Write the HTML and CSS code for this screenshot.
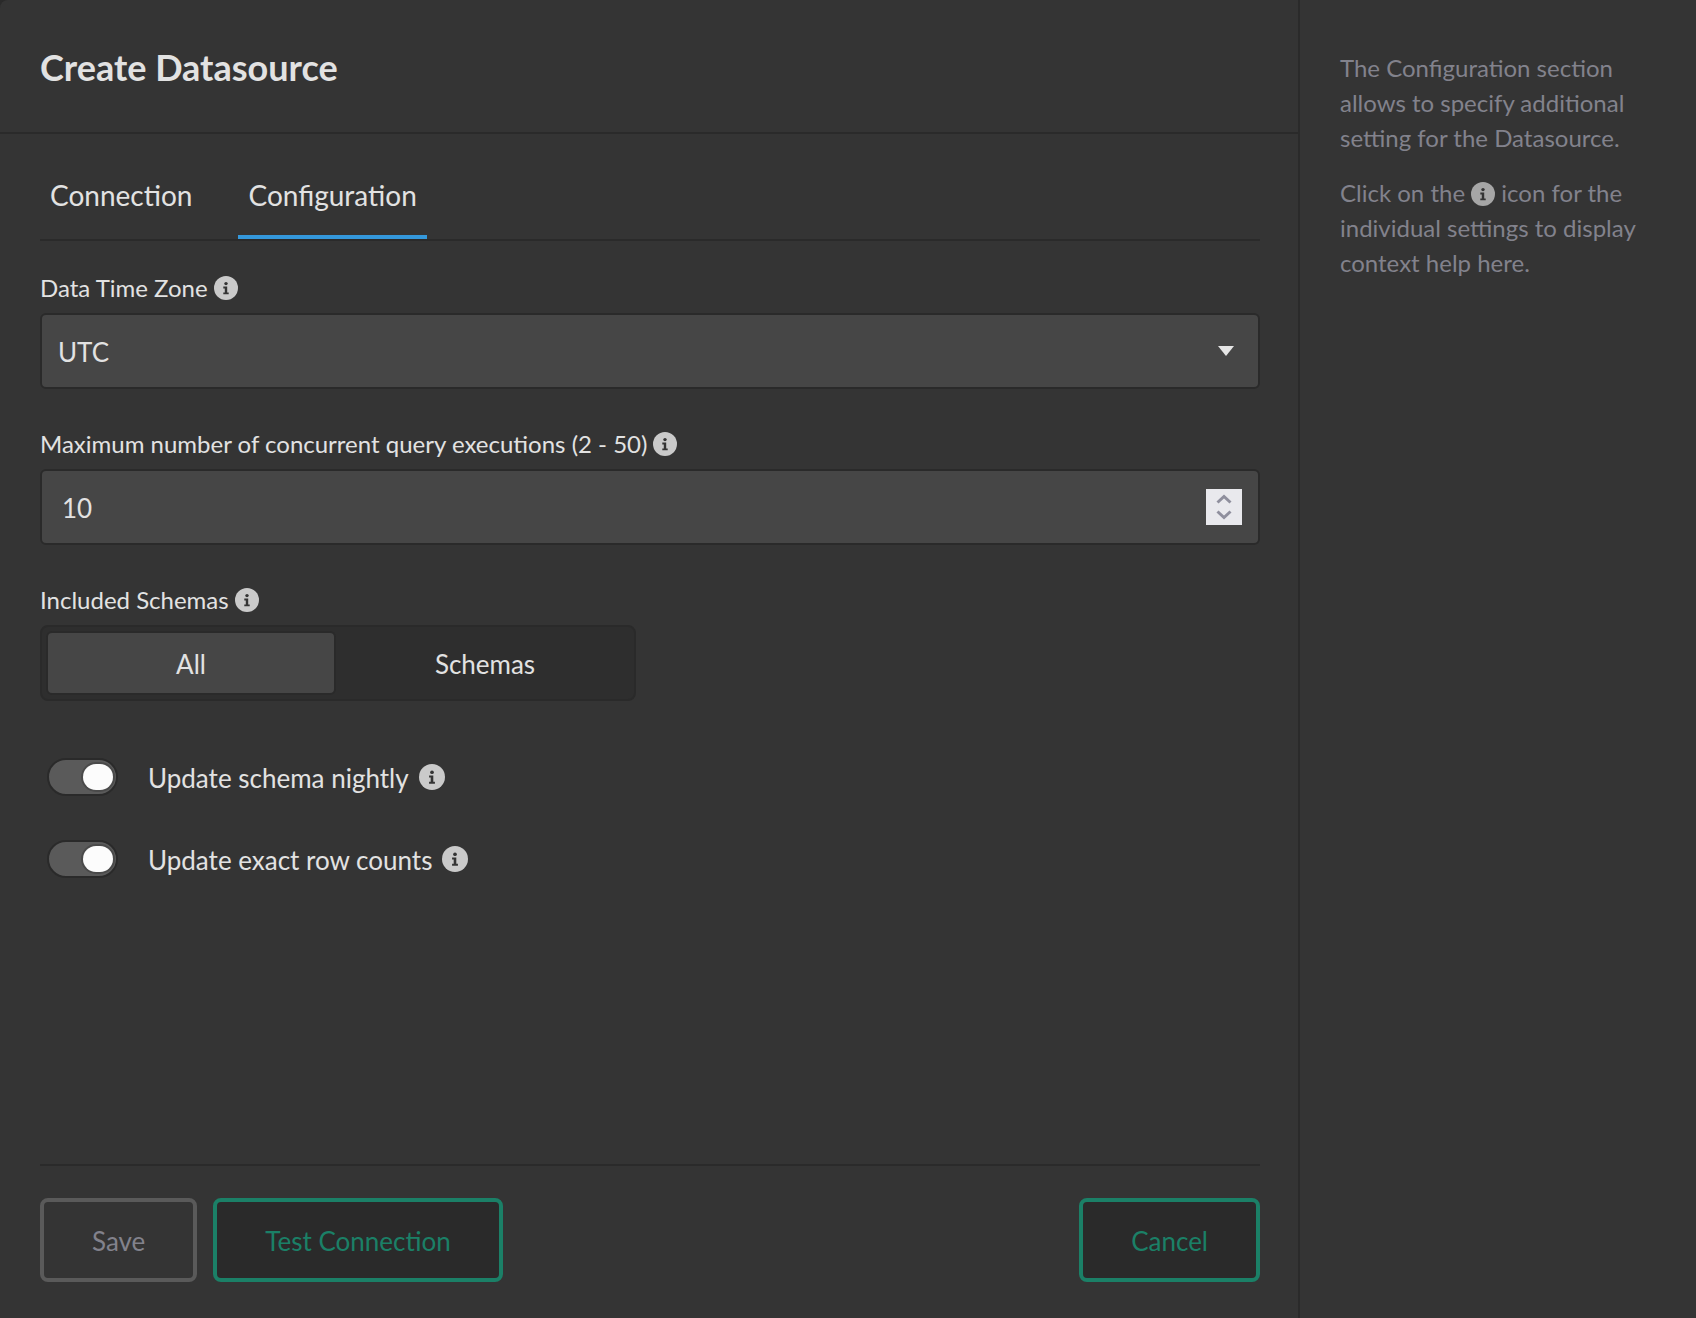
FILE: index.html
```html
<!DOCTYPE html>
<html lang="en">
<head>
    <meta charset="UTF-8">
    <title>Create Datasource</title>
    <link rel="stylesheet" href="styles.css">
</head>
<body>
    <svg class="defs" aria-hidden="true">
        <symbol id="info" viewBox="0 0 24 24">
            <circle cx="12" cy="12" r="12" fill="currentColor"/>
            <circle cx="12" cy="7.6" r="1.7" fill="#343434"/>
            <path d="M9.3 10.6h3.9v5.8h1.5v1.8H9.3v-1.8h1.5v-4H9.3z" fill="#343434"/>
        </symbol>
    </svg>
    <div class="dialog">
        <main class="main">
            <header class="header">
                <h1>Create Datasource</h1>
            </header>
            <form class="content">
                <nav class="tabs">
                    <a href="#connection">Connection</a>
                    <a href="#configuration" class="active">Configuration</a>
                </nav>
                <div class="field">
                    <div class="caption">
                        <label for="timezone">Data Time Zone</label>
                        <svg class="info"><use href="#info"/></svg>
                    </div>
                    <div class="control">
                        <select id="timezone" class="box">
                            <option>UTC</option>
                        </select>
                        <svg class="arrow" viewBox="0 0 16 10"><path d="M0 0h16l-8 10z" fill="#e6e6e6"/></svg>
                    </div>
                </div>
                <div class="field">
                    <div class="caption">
                        <label for="queries">Maximum number of concurrent query executions (2 - 50)</label>
                        <svg class="info"><use href="#info"/></svg>
                    </div>
                    <div class="control">
                        <input type="number" id="queries" class="box number" min="2" max="50" value="10">
                        <svg class="spin" viewBox="0 0 36 36" fill="none" stroke="#8f8f9d" stroke-width="3"><path d="M11.5 13.5l6.5-6 6.5 6M11.5 22.5l6.5 6 6.5-6"/></svg>
                    </div>
                </div>
                <div class="field">
                    <div class="caption">
                        <span id="schemas">Included Schemas</span>
                        <svg class="info"><use href="#info"/></svg>
                    </div>
                    <div class="segment" role="group" aria-labelledby="schemas">
                        <button type="button" class="active">All</button>
                        <button type="button">Schemas</button>
                    </div>
                </div>
                <div class="switches">
                    <div class="switch">
                        <input type="checkbox" id="nightly" checked>
                        <label for="nightly">Update schema nightly</label>
                        <svg class="info"><use href="#info"/></svg>
                    </div>
                    <div class="switch">
                        <input type="checkbox" id="counts" checked>
                        <label for="counts">Update exact row counts</label>
                        <svg class="info"><use href="#info"/></svg>
                    </div>
                </div>
                <footer class="footer">
                    <button type="submit" class="btn" disabled>Save</button>
                    <button type="button" class="btn">Test Connection</button>
                    <button type="button" class="btn cancel">Cancel</button>
                </footer>
            </form>
        </main>
        <aside class="help">
            <p>The Configuration section allows to specify additional setting for the Datasource.</p>
            <p>Click on the <svg class="info"><use href="#info"/></svg> icon for the individual settings to display context help here.</p>
        </aside>
    </div>
</body>
</html>
```
FILE: styles.css
```css
* {
    box-sizing: border-box;
    margin: 0;
    padding: 0;
}
body {
    background-color: #2a2a2a;
    color: #e2e2e2;
    font: 24px/36px Lato, sans-serif;
}
button,
input,
select {
    font: inherit;
    color: inherit;
}
.defs {
    display: none;
}
.dialog {
    display: flex;
    min-height: 100vh;
    background-color: #343434;
    border-top-left-radius: 8px;
}
.main {
    flex: 1;
    display: flex;
    flex-direction: column;
}
.header {
    padding: 45px 40px 43px;
    border-bottom: 2px solid #2a2a2a;
}
.header h1 {
    font-size: 36px;
    line-height: 44px;
}
.content {
    flex: 1;
    display: flex;
    flex-direction: column;
    padding: 24px 38px 36px 40px;
}
.tabs {
    display: flex;
    gap: 36px;
    margin-bottom: 29px;
    border-bottom: 2px solid #2a2a2a;
    font-size: 28px;
}
.tabs a {
    padding: 19px 10px 22px;
    border-bottom: 4px solid transparent;
    color: inherit;
    text-decoration: none;
}
.tabs .active {
    border-color: #3498db;
}
.info {
    flex: none;
    width: 24px;
    height: 24px;
    color: #cacaca;
}
.field {
    margin-bottom: 37px;
}
.caption {
    display: flex;
    align-items: center;
    gap: 6px;
    margin-bottom: 7px;
}
.control {
    position: relative;
}
.box {
    display: block;
    width: 100%;
    height: 76px;
    padding: 2px 16px 0;
    border: 2px solid #2a2a2a;
    border-radius: 6px;
    background-color: #464646;
    font-size: 26px;
    appearance: none;
}
.number {
    padding: 2px 20px 0;
    appearance: textfield;
}
.arrow {
    position: absolute;
    top: 33px;
    right: 26px;
    width: 16px;
    height: 10px;
}
.spin {
    position: absolute;
    top: 20px;
    right: 18px;
    width: 36px;
    height: 36px;
    background-color: #e9e9ed;
}
.segment {
    display: flex;
    gap: 4px;
    width: 596px;
    max-width: 100%;
    height: 76px;
    padding: 4px;
    border: 2px solid #2a2a2a;
    border-radius: 8px;
    background-color: #2e2e2e;
    font-size: 26px;
}
.segment button {
    flex: 1;
    padding-top: 2px;
    border: 2px solid transparent;
    border-radius: 6px;
    background: none;
}
.segment .active {
    border-color: #2a2a2a;
    background-color: #464646;
}
.switches {
    display: flex;
    flex-direction: column;
    gap: 44px;
    padding: 20px 7px;
    font-size: 26px;
}
.switch {
    display: flex;
    align-items: center;
    height: 38px;
}
.switch input {
    display: flex;
    align-items: center;
    justify-content: flex-end;
    width: 71px;
    height: 38px;
    margin-right: 30px;
    padding: 0 3px;
    border: 2px solid #2a2a2a;
    border-radius: 19px;
    background-color: #5a5a5a;
    appearance: none;
}
.switch input::before {
    content: "";
    width: 30px;
    height: 26px;
    border-radius: 13px;
    background-color: #fcfcfc;
    box-shadow: 0 0 0 2px #4a4a4a;
}
.switch label {
    padding-top: 1px;
}
.switch .info {
    width: 26px;
    height: 26px;
    margin-left: 10px;
}
.footer {
    display: flex;
    gap: 16px;
    margin-top: auto;
    padding-top: 32px;
    border-top: 2px solid #2a2a2a;
}
.btn {
    height: 84px;
    padding: 2px 48px 0;
    border: 4px solid #1b8067;
    border-radius: 8px;
    background-color: #2a2a2a;
    color: #1b8067;
    font-size: 26px;
}
.btn:disabled {
    border-color: #5a5a5a;
    background: none;
    color: #82828c;
}
.cancel {
    margin-left: auto;
}
.help {
    width: 398px;
    padding: 50px 40px;
    border-left: 2px solid #2a2a2a;
    color: #82828c;
    line-height: 35px;
}
.help p {
    margin-bottom: 20px;
}
.help .info {
    color: #a6a6a6;
    vertical-align: -4px;
}
```
